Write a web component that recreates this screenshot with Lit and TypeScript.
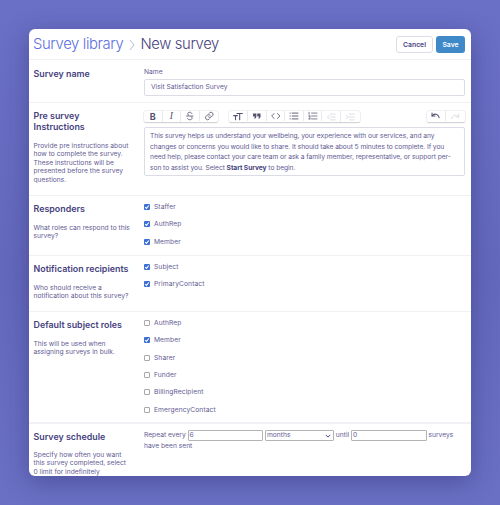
import { LitElement, html, css, svg } from "lit";
import { customElement } from "lit/decorators.js";

const ic = (c: unknown) => html`<svg viewBox="0 0 24 24" width="10" height="10" fill="none" stroke="currentColor" stroke-width="2" stroke-linecap="round" stroke-linejoin="round">${c}</svg>`;

const group1 = [
  html`<b class="g bold">B</b>`,
  html`<i class="g ital">I</i>`,
  ic(svg`<path d="M17 6c-1-2-3-3-5-3-3 0-5 1.500-5 4 0 1.500 1 2.500 2 3M4 12h16M16 14c1 1 1.500 2 1.500 3 0 2.500-2.500 4-5.500 4-2.500 0-4.500-1-5.500-3"/>`),
  ic(svg`<path d="M10 14a5 5 0 0 0 7 0l3-3a5 5 0 0 0-7-7l-1.500 1.500M14 10a5 5 0 0 0-7 0l-3 3a5 5 0 0 0 7 7l1.500-1.500"/>`),
];
const group2 = [
  ic(svg`<path d="M10 6h13M16.500 6v15M2 11h9M6.500 11v10" stroke-width="2.600"/>`),
  html`<svg viewBox="0 0 24 24" width="10" height="10" fill="currentColor"><path d="M3 6h8v7c0 3-2 5-5 5l-1-2c2 0 2.500-1 2.500-3H3zM13 6h8v7c0 3-2 5-5 5l-1-2c2 0 2.500-1 2.500-3H13z"/></svg>`,
  ic(svg`<path d="M8 6l-6 6 6 6M16 6l6 6-6 6"/>`),
  ic(svg`<path d="M8 5h14M8 12h14M8 19h14M3 5h.5M3 12h.5M3 19h.5" stroke-width="2.200"/>`),
  ic(svg`<path d="M9 5h13M9 12h13M9 19h13M3 3v5M2 12h3M2 19h3M5 12v7" stroke-width="1.800"/>`),
];
const group2b = [
  html`<span class="dim">${ic(svg`<path d="M11 5h11M11 12h11M11 19h11M8 8l-5 4 5 4"/>`)}</span>`,
  html`<span class="dim">${ic(svg`<path d="M11 5h11M11 12h11M11 19h11M3 8l5 4-5 4"/>`)}</span>`,
];
const undo = [
  ic(svg`<path d="M3 5v7h7" stroke-width="2.600"/><path d="M3 12c3-4 7-5 10-4 4 1 6 4 7 8" stroke-width="2.600"/>`),
  html`<span class="dim">${ic(svg`<path d="M21 5v7h-7"/><path d="M21 12c-3-4-7-5-10-4-4 1-6 4-7 8"/>`)}</span>`,
];

const check = (label: string, on: boolean) => html`
  <div class="chk">
    <span class="box ${on ? "on" : ""}">${on ? html`<svg viewBox="0 0 6 6" width="6" height="6" fill="none" stroke="#fff" stroke-width="1.100"><path d="M1.200 3.100l1.300 1.300 2.300-2.900"/></svg>` : ""}</span>
    <span>${label}</span>
  </div>`;

@customElement("app-root")
export class AppRoot extends LitElement {
  static styles = css`
    :host {
      display: block;
      width: 500px;
      height: 505px;
      box-sizing: border-box;
      padding: 29px;
      overflow: hidden;
      background: linear-gradient(180deg, #6a70c6 0%, #6468bc 55%, #6a70c4 100%);
      font-family: "Inter", "Lato", sans-serif;
      color: #47437f;
    }
    .card {
      height: 447px;
      overflow: hidden;
      background: #fff;
      border-radius: 6px;
      box-shadow: 0 6px 24px rgba(35, 35, 95, 0.4);
    }
    .head {
      display: flex;
      align-items: center;
      height: 30px;
      padding: 0 6px 0 4px;
      border-bottom: 1px solid #f1f1f5;
    }
    h1 {
      flex: 1;
      display: flex;
      align-items: center;
      margin: 0;
      font-size: 14.800px;
      font-weight: 300;
      letter-spacing: -0.350px;
      white-space: nowrap;
      color: #46427e;
    }
    h1 a { color: #5a6ee0; }
    h1 svg { margin: 1px 5px 0 6px; }
    .btn {
      box-sizing: border-box;
      height: 17px;
      border-radius: 3px;
      font-size: 6.800px;
      font-weight: 600;
      display: flex;
      align-items: center;
      justify-content: center;
    }
    .cancel { width: 37px; border: 1px solid #dddde8; color: #47437f; margin-right: 3px; }
    .save { width: 29px; background: #3f89c9; color: #fff; }
    .sec {
      display: grid;
      grid-template-columns: 110.500px minmax(0, 1fr);
      box-sizing: border-box;
      border-bottom: 1px solid #f1f1f5;
      padding: 0 6.500px 0 4.500px;
    }
    .sec.s1 { height: 43px; padding-top: 7.500px; }
    .sec.s2 { height: 93px; padding-top: 7px; }
    .sec.s3 { height: 60px; padding-top: 2.500px; }
    .sec.s3 > div:first-child { padding-top: 4.500px; }
    .sec.s4 { height: 56px; padding-top: 2px; }
    .sec.s4 > div:first-child { padding-top: 5px; }
    .sec.s5 { height: 112px; padding-top: 2.500px; border-bottom-width: 2px; }
    .sec.s5 > div:first-child { padding-top: 4.500px; }
    .sec.s6 { height: 53px; padding-top: 5px; border-bottom: 0; }
    .sec.s6 > div:first-child { padding-top: 2px; }
    .sec.s6 h2 { margin-bottom: 8.500px; }
    h2 {
      margin: 0 0 9.500px;
      font-size: 8.900px;
      line-height: 11px;
      font-weight: 600;
      color: #46427e;
    }
    .desc { width: 98px; font-size: 6.700px; line-height: 8.500px; color: #5f5b94; margin: 0; }
    .lab { font-size: 6.700px; line-height: 9px; color: #5f5b94; margin: 0 0 2px; }
    .input {
      box-sizing: border-box;
      height: 17px;
      border: 1px solid #dcdce6;
      border-radius: 2px;
      padding: 0 6px;
      display: flex;
      align-items: center;
      font-size: 6.700px;
      color: #5f5b94;
    }
    .bar { display: flex; margin-bottom: 5px; margin-top: 1px; }
    .grp {
      display: flex;
      height: 11px;
      border-radius: 2px;
      background: #fff;
      box-shadow: 0 0 0 0.5px #e4e4ea, 0 1px 1px 0 #bbbbc4;
      color: #55526f;
    }
    .grp > * { width: 18.600px; display: flex; align-items: center; justify-content: center; border-right: 1px solid #e8e8ee; box-sizing: border-box; }
    .grp > *:last-child { border-right: 0; }
    .grp.g1 { margin-right: 11px; }
    .spacer { flex: 1; }
    .g { font-family: "Liberation Serif", serif; font-size: 9.500px; line-height: 1; font-weight: 400; }
    .bold { font-family: "Inter", sans-serif; font-weight: 700; font-size: 9px; }
    .dim { color: #d6d6de; }
    .editor {
      box-sizing: border-box;
      height: 49px;
      border: 1px solid #dcdce6;
      border-radius: 2px;
      padding: 3px 5px;
      font-size: 6.700px;
      letter-spacing: -0.070px;
      line-height: 10.500px;
      color: #5f5b94;
      white-space: nowrap;
    }
    .editor b { color: #46427e; font-weight: 700; }
    .chk { display: flex; align-items: center; height: 17.300px; font-size: 6.700px; letter-spacing: 0.080px; color: #5f5b94; }
    .box { box-sizing: border-box; flex: none; width: 6px; height: 6px; margin-right: 4px; border: 0.500px solid #a8a8a8; border-radius: 1px; background: #fff; display: flex; overflow: hidden; }
    .box.on { background: #3d6fd8; border: 0; }
    .box svg { flex: none; }
    .rep { font-size: 6.700px; line-height: 10px; color: #5f5b94; padding-top: 1px; }
    .rep .nb { display: inline-block; vertical-align: middle; box-sizing: border-box; height: 11px; border: 1px solid #b4b4b4; border-radius: 1px; font-size: 6.700px; line-height: 9px; padding-left: 1px; }
    .n1, .n2 { width: 75.500px; }
    .rep .sel { display: inline-flex; align-items: center; justify-content: space-between; width: 69px; padding-right: 2px; }
  `;

  render() {
    return html`<div class="card">
      <div class="head">
        <h1><a>Survey library</a><svg viewBox="0 0 6 12" width="6" height="12" fill="none" stroke="#a9a9c0" stroke-width="0.800"><path d="M1 1l4 5-4 5"/></svg>New survey</h1>
        <div class="btn cancel">Cancel</div>
        <div class="btn save">Save</div>
      </div>
      <section class="sec s1">
        <div><h2>Survey name</h2></div>
        <div><p class="lab">Name</p><div class="input">Visit Satisfaction Survey</div></div>
      </section>
      <section class="sec s2">
        <div>
          <h2>Pre survey<br />Instructions</h2>
          <p class="desc">Provide pre instructions about how to complete the survey. These instructions will be presented before the survey questions.</p>
        </div>
        <div>
          <div class="bar">
            <div class="grp g1">${group1}</div>
            <div class="grp">${group2}${group2b}</div>
            <div class="spacer"></div>
            <div class="grp">${undo}</div>
          </div>
          <div class="editor">This survey helps us understand your wellbeing, your experience with our services, and any<br />changes or concerns you would like to share. It should take about 5 minutes to complete. If you<br />need help, please contact your care team or ask a family member, representative, or support per-<br />son to assist you. Select <b>Start Survey</b> to begin.</div>
        </div>
      </section>
      <section class="sec s3">
        <div><h2>Responders</h2><p class="desc">What roles can respond to this survey?</p></div>
        <div>${check("Staffer", true)}${check("AuthRep", true)}${check("Member", true)}</div>
      </section>
      <section class="sec s4">
        <div><h2>Notification recipients</h2><p class="desc">Who should receive a notification about this survey?</p></div>
        <div>${check("Subject", true)}${check("PrimaryContact", true)}</div>
      </section>
      <section class="sec s5">
        <div><h2>Default subject roles</h2><p class="desc">This will be used when assigning surveys in bulk.</p></div>
        <div>${check("AuthRep", false)}${check("Member", true)}${check("Sharer", false)}${check("Funder", false)}${check("BillingRecipient", false)}${check("EmergencyContact", false)}</div>
      </section>
      <section class="sec s6">
        <div><h2>Survey schedule</h2><p class="desc">Specify how often you want this survey completed, select 0 limit for indefinitely</p></div>
        <div class="rep">Repeat every <span class="nb n1">6</span> <span class="nb sel">months<svg viewBox="0 0 8 5" width="6" height="4" fill="none" stroke="#47437f" stroke-width="1.300"><path d="M1 1l3 3 3-3"/></svg></span> until <span class="nb n2">0</span> surveys have been sent</div>
      </section>
    </div>`;
  }
}
